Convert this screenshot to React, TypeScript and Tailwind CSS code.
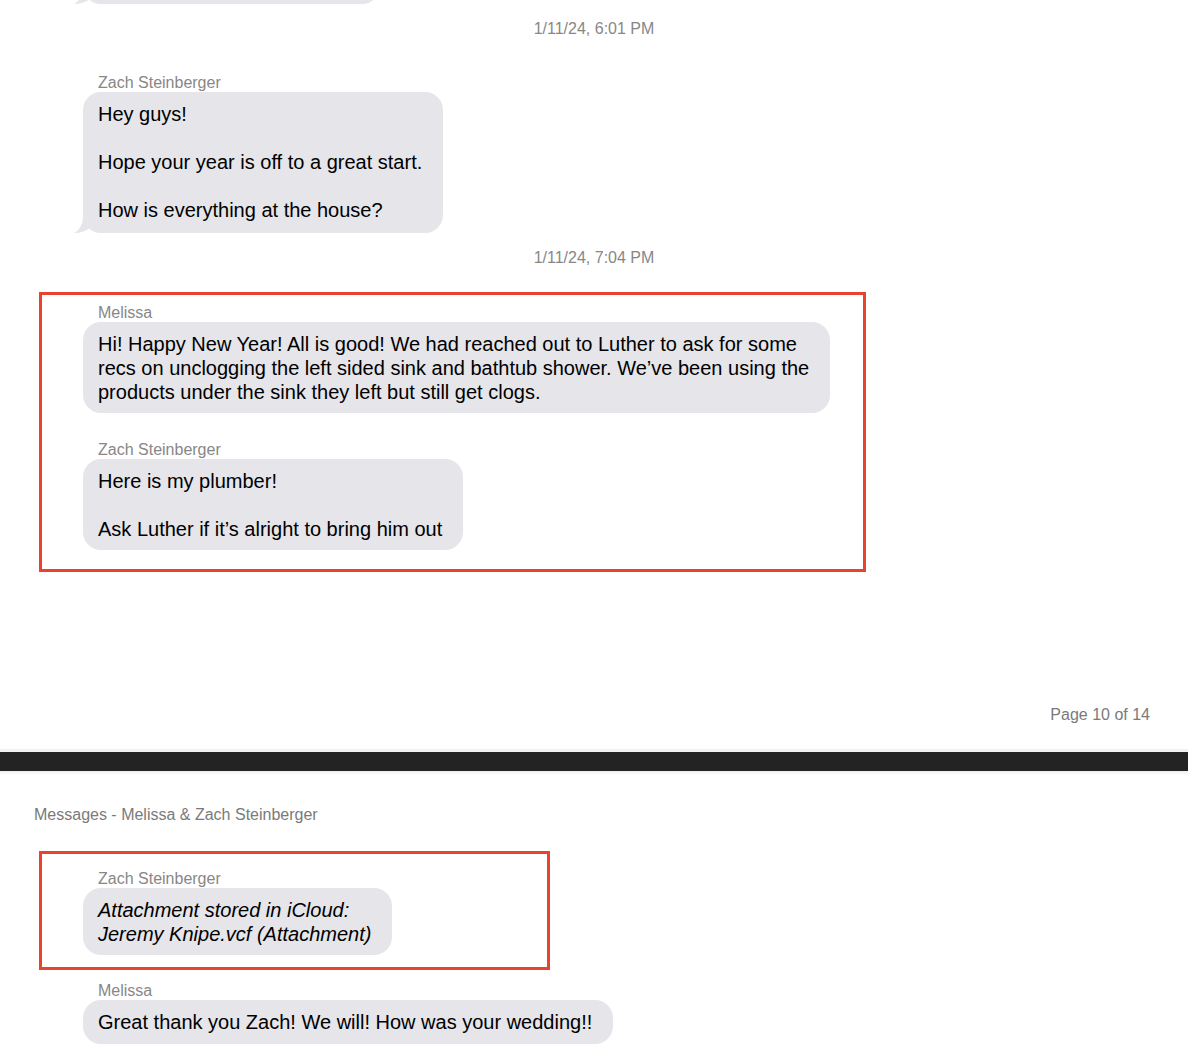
import React from "react";

const Tail = () => (
  <svg
    className="absolute left-[-9px] bottom-0"
    width="20"
    height="18"
    viewBox="0 0 20 18"
  >
    <path d="M9 0 C9 8 7 14 0 18 C6 18 12 16 16 13 L20 13 L20 0 Z" fill="#e5e5ea" />
  </svg>
);

function Label({ children }: { children: React.ReactNode }) {
  return (
    <div className="pl-[15px] text-[16px] leading-[18px] text-[#878787]">{children}</div>
  );
}

function Bubble({
  children,
  tail,
  italic,
  pb = "pb-[9px]",
}: {
  children: React.ReactNode;
  tail?: boolean;
  italic?: boolean;
  pb?: string;
}) {
  return (
    <div
      className={
        "relative w-fit rounded-[18px] bg-[#e5e5ea] pl-[15px] pr-[21px] pt-[10px] text-[20px] leading-[24px] text-black " +
        pb +
        (italic ? " italic" : "")
      }
    >
      {tail && <Tail />}
      <div className="relative">{children}</div>
    </div>
  );
}

export default function App() {
  return (
    <div
      className="w-[1188px] h-[1064px] overflow-hidden bg-white"
      style={{ fontFamily: '"Liberation Sans", Arial, sans-serif' }}
    >
      {/* page top */}
      <div className="px-[39px]">
        <div className="pl-[44px]">
          <div className="relative h-[4px]">
            <div className="absolute bottom-0 left-0 h-[40px] w-[297px] rounded-[18px] bg-[#e5e5ea]">
              <Tail />
            </div>
          </div>
        </div>
        <div className="mt-[15px] text-center text-[16px] leading-[20px] text-[#878787]">
          1/11/24, 6:01 PM
        </div>
        <div className="mt-[35px] pl-[44px]">
          <Label>Zach Steinberger</Label>
          <Bubble tail pb="pb-[11px]">
            <div>Hey guys!</div>
            <div>&nbsp;</div>
            <div>Hope your year is off to a great start.</div>
            <div>&nbsp;</div>
            <div>How is everything at the house?</div>
          </Bubble>
        </div>
        <div className="mt-[15px] text-center text-[16px] leading-[20px] text-[#878787]">
          1/11/24, 7:04 PM
        </div>
        <div className="mt-[24px] w-[827px] border-[3px] border-[#e8432d] pl-[41px] pt-[9px] pb-[19px]">
          <Label>Melissa</Label>
          <Bubble>
            <div>Hi! Happy New Year! All is good! We had reached out to Luther to ask for some</div>
            <div>recs on unclogging the left sided sink and bathtub shower. We’ve been using the</div>
            <div>products under the sink they left but still get clogs.</div>
          </Bubble>
          <div className="mt-[28px]">
            <Label>Zach Steinberger</Label>
            <Bubble>
              <div>Here is my plumber!</div>
              <div>&nbsp;</div>
              <div>Ask Luther if it’s alright to bring him out</div>
            </Bubble>
          </div>
        </div>
      </div>

      <div className="mt-[133px] flex justify-end pr-[38px] text-[16px] leading-[20px] text-[#7a7a7a]">
        Page 10 of 14
      </div>

      {/* page break */}
      <div className="mt-[24px] h-[3px] bg-[#f1f1f1]" />
      <div className="h-[19px] bg-[#232323]" />
      <div className="h-[4px] bg-gradient-to-b from-[#ededed] to-white" />

      <div className="mt-[30px] pl-[34px] text-[16px] leading-[20px] text-[#7a7a7a]">
        Messages - Melissa &amp; Zach Steinberger
      </div>

      <div className="px-[39px]">
        <div className="mt-[26px] w-[511px] border-[3px] border-[#e8432d] pl-[41px] pt-[16px] pb-[12px]">
          <Label>Zach Steinberger</Label>
          <Bubble italic>
            <div>Attachment stored in iCloud:</div>
            <div>Jeremy Knipe.vcf (Attachment)</div>
          </Bubble>
        </div>
        <div className="mt-[12px] pl-[44px]">
          <Label>Melissa</Label>
          <Bubble pb="pb-[10px]">
            <div>Great thank you Zach! We will! How was your wedding!!</div>
          </Bubble>
        </div>
      </div>
    </div>
  );
}
